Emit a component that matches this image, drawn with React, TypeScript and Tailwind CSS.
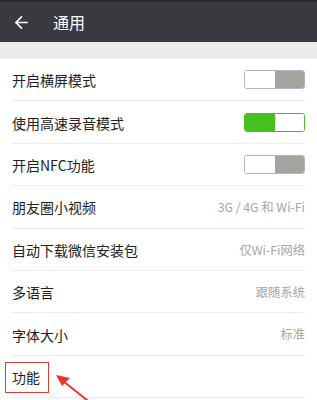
import { ArrowLeft } from 'lucide-react'

type Row =
  | { label: string; kind: 'toggle'; on: boolean }
  | { label: string; kind: 'value'; value: string }
  | { label: string; kind: 'plain' }

const rows: Row[] = [
  { label: '开启横屏模式', kind: 'toggle', on: false },
  { label: '使用高速录音模式', kind: 'toggle', on: true },
  { label: '开启NFC功能', kind: 'toggle', on: false },
  { label: '朋友圈小视频', kind: 'value', value: '3G / 4G 和 Wi-Fi' },
  { label: '自动下载微信安装包', kind: 'value', value: '仅Wi-Fi网络' },
  { label: '多语言', kind: 'value', value: '跟随系统' },
  { label: '字体大小', kind: 'value', value: '标准' },
  { label: '功能', kind: 'plain' },
]

function Toggle({ on }: { on: boolean }) {
  if (on) {
    return (
      <div className="flex h-[19px] w-[61px] overflow-hidden rounded-[3px] border border-[#46c01f]">
        <div className="flex-1 bg-[#46c01f]" />
        <div className="flex-1 bg-white" />
      </div>
    )
  }
  return (
    <div className="flex h-[19px] w-[61px] overflow-hidden rounded-[3px] border border-[#b4b6b1]">
      <div className="flex-1 bg-white" />
      <div className="flex-1 bg-[#a2a59f]" />
    </div>
  )
}

export default function App() {
  return (
    <div
      className="relative h-[400px] w-[317px] overflow-hidden bg-white"
      style={{ fontFamily: '"Noto Sans CJK SC", "Noto Sans", sans-serif' }}
    >
      {/* Header */}
      <div className="border-t-2 border-[#2a2b2f] bg-[#393a3f]">
        <div className="flex h-[40px] items-center">
          <div className="flex w-[42px] items-center justify-center">
            <ArrowLeft className="h-[19px] w-[19px] text-white" strokeWidth={2.2} />
          </div>
          <span className="ml-[11px] text-[16px] text-white">通用</span>
        </div>
      </div>

      {/* Gray band */}
      <div className="h-[17px] bg-[#ebebeb]" />

      {/* List */}
      <div className="bg-white">
        {rows.map((row) => (
          <div key={row.label} className="mx-[12px] flex h-[42.4px] items-center justify-between border-b border-[#ececec]">
            <span className="pt-[2px] text-[14px] text-[#222]">{row.label}</span>
            {row.kind === 'toggle' && <Toggle on={row.on} />}
            {row.kind === 'value' && <span className="pt-[1px] text-[12.3px] text-[#a6a6a6]">{row.value}</span>}
          </div>
        ))}
      </div>

      {/* Annotation: red box + arrow */}
      <div className="absolute left-[5px] top-[362px] h-[31px] w-[44px] border-[1.5px] border-[#e23b33]" />
      <svg className="absolute left-0 top-0" width="317" height="400" viewBox="0 0 317 400">
        <line x1="63" y1="381" x2="92" y2="404" stroke="#e5392f" strokeWidth="2" />
        <polygon points="56,375 70,378 62,386" fill="#e5392f" />
      </svg>
    </div>
  )
}
